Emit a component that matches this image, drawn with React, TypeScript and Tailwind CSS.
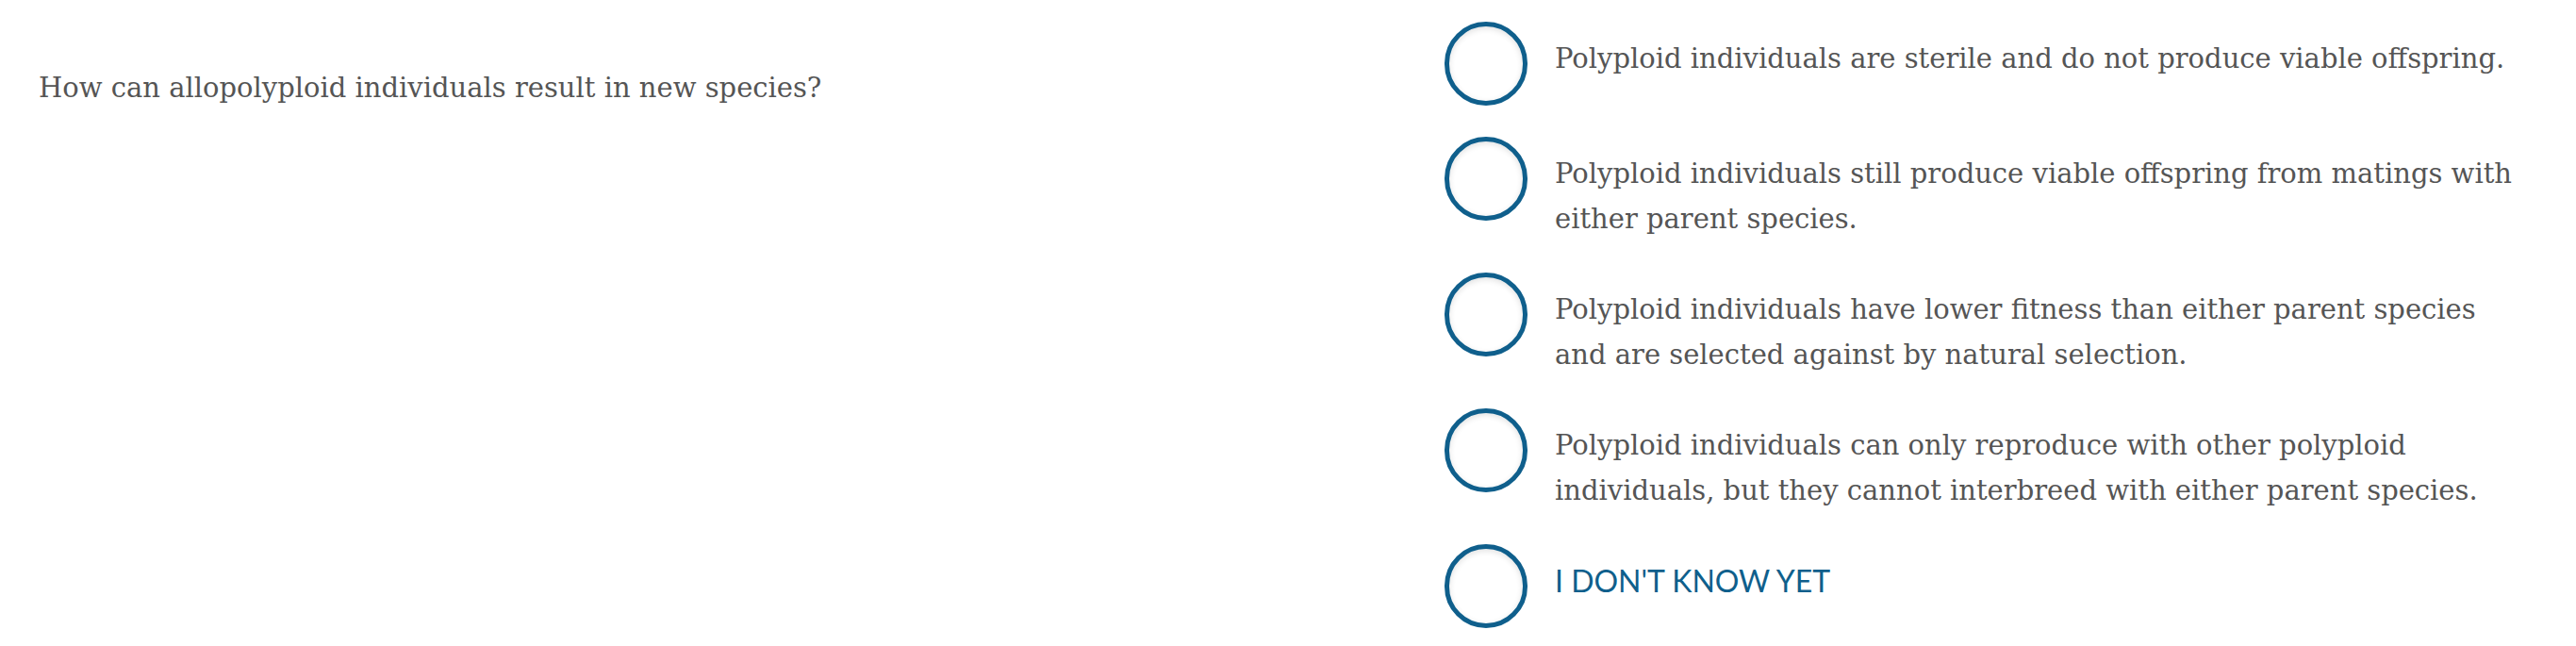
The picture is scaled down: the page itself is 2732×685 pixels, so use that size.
import React from "react";

const options = [
  "Polyploid individuals are sterile and do not produce viable offspring.",
  "Polyploid individuals still produce viable offspring from matings with either parent species.",
  "Polyploid individuals have lower fitness than either parent species and are selected against by natural selection.",
  "Polyploid individuals can only reproduce with other polyploid individuals, but they cannot interbreed with either parent species.",
];

function Radio() {
  return (
    <div className="w-[88px] h-[89px] shrink-0 rounded-full border-[5px] border-[#0f5f8c] bg-white shadow-[inset_0_2px_6px_rgba(0,0,0,0.12)]" />
  );
}

export default function App() {
  return (
    <div className="w-[2732px] h-[685px] bg-white flex" style={{ fontFamily: '"DejaVu Serif", serif' }}>
      <div className="w-[1532px] shrink-0 pl-[41px] pt-[69px]">
        <p className="text-[29px] leading-[48px] text-[#555555]">How can allopolyploid individuals result in new species?</p>
      </div>
      <div className="flex-1 pt-[23px] flex flex-col gap-[33px]">
        {options.map((o) => (
          <div key={o} className="flex items-start gap-[29px]">
            <Radio />
            <p className="pt-[15px] text-[29px] leading-[48px] text-[#555555] w-[1030px]">{o}</p>
          </div>
        ))}
        <div className="flex items-start gap-[29px]">
          <Radio />
          <p className="pt-[15px] text-[32px] leading-[48px] text-[#0f5f8c] uppercase" style={{ fontFamily: 'Lato, sans-serif' }}>
            I don't know yet
          </p>
        </div>
      </div>
    </div>
  );
}
